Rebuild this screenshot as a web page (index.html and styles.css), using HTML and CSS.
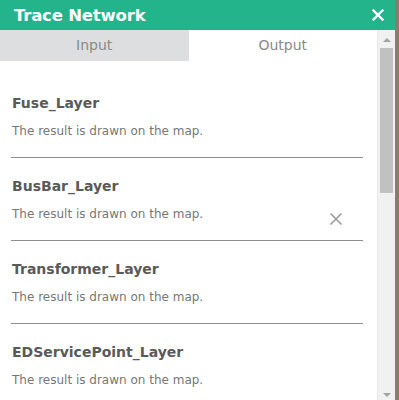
FILE: index.html
```html
<!DOCTYPE html>
<html lang="en">
<head>
    <meta charset="UTF-8">
    <title>Trace Network</title>
    <link rel="stylesheet" href="styles.css">
</head>
<body>
    <div class="panel">
        <div class="panel-header">
            <span class="panel-title">Trace Network</span>
            <svg class="close-btn" width="12" height="12" viewBox="0 0 12 12">
                <path d="M1.5 1.5 L10.5 10.5 M10.5 1.5 L1.5 10.5" stroke="#fff" stroke-width="2.4" stroke-linecap="square"/>
            </svg>
        </div>
        <div class="panel-body">
            <div class="main">
                <div class="tabs">
                    <div class="tab">Input</div>
                    <div class="tab active">Output</div>
                </div>
                <div class="results">
                    <div class="result">
                        <div class="result-name">Fuse_Layer</div>
                        <div class="result-text">The result is drawn on the map.</div>
                    </div>
                    <div class="result">
                        <div class="result-name">BusBar_Layer</div>
                        <div class="result-text">The result is drawn on the map.</div>
                        <svg class="clear-btn" width="14" height="14" viewBox="0 0 14 14">
                            <path d="M1.5 1.5 L12.5 12.5 M12.5 1.5 L1.5 12.5" stroke="#9a9a9a" stroke-width="1.6"/>
                        </svg>
                    </div>
                    <div class="result">
                        <div class="result-name">Transformer_Layer</div>
                        <div class="result-text">The result is drawn on the map.</div>
                    </div>
                    <div class="result">
                        <div class="result-name">EDServicePoint_Layer</div>
                        <div class="result-text">The result is drawn on the map.</div>
                    </div>
                </div>
            </div>
            <div class="scrollbar">
                <div class="arrow-up"></div>
                <div class="thumb"></div>
                <div class="arrow-down"></div>
            </div>
        </div>
    </div>
</body>
</html>
```

FILE: styles.css
```css
html, body {
    margin: 0;
    padding: 0;
    height: 100%;
}

body {
    background: #8a7d6c;
    font-family: "DejaVu Sans", Verdana, sans-serif;
    overflow: hidden;
}

.panel {
    width: 395px;
    height: 400px;
    background: #fff;
    display: flex;
    flex-direction: column;
}

.panel-header {
    height: 30px;
    background: #23b48c;
    display: flex;
    align-items: center;
    justify-content: space-between;
    padding: 0 11px 0 14px;
    flex-shrink: 0;
}

.panel-title {
    color: #fff;
    font-size: 16.5px;
    font-weight: bold;
    letter-spacing: -0.2px;
}

.close-btn {
    display: block;
}

.panel-body {
    flex: 1;
    display: flex;
    min-height: 0;
}

.main {
    flex: 1;
    overflow: hidden;
}

.tabs {
    display: flex;
    height: 31px;
}

.tab {
    flex: 1;
    display: flex;
    align-items: center;
    justify-content: center;
    padding-bottom: 1px;
    font-size: 14px;
    color: #8a8a8a;
    background: #dcdee0;
}

.tab.active {
    background: #fff;
}

.results {
    padding: 14px 14px 0 11px;
}

.result {
    position: relative;
    padding: 19px 0 18px;
    border-bottom: 1px solid #8e8e8e;
}

.result-name {
    font-size: 14px;
    line-height: 18px;
    font-weight: bold;
    color: #5a5a5a;
    padding-left: 1px;
}

.result-text {
    margin-top: 11px;
    font-size: 12px;
    line-height: 16px;
    color: #777;
    padding-left: 1px;
}

.clear-btn {
    position: absolute;
    right: 20px;
    top: 54px;
}

.scrollbar {
    width: 18px;
    background: #f1f1f1;
    border-left: 1px solid #e8e8e8;
    display: flex;
    flex-direction: column;
    align-items: center;
    box-sizing: border-box;
}

.arrow-up {
    margin-top: 8px;
    width: 0;
    height: 0;
    border-left: 4px solid transparent;
    border-right: 4px solid transparent;
    border-bottom: 4px solid #a3a3a3;
}

.thumb {
    margin-top: 6px;
    width: 13px;
    height: 145px;
    background: #c1c1c1;
}

.arrow-down {
    margin-top: auto;
    margin-bottom: 3px;
    width: 0;
    height: 0;
    border-left: 4px solid transparent;
    border-right: 4px solid transparent;
    border-top: 4px solid #a3a3a3;
}
```
